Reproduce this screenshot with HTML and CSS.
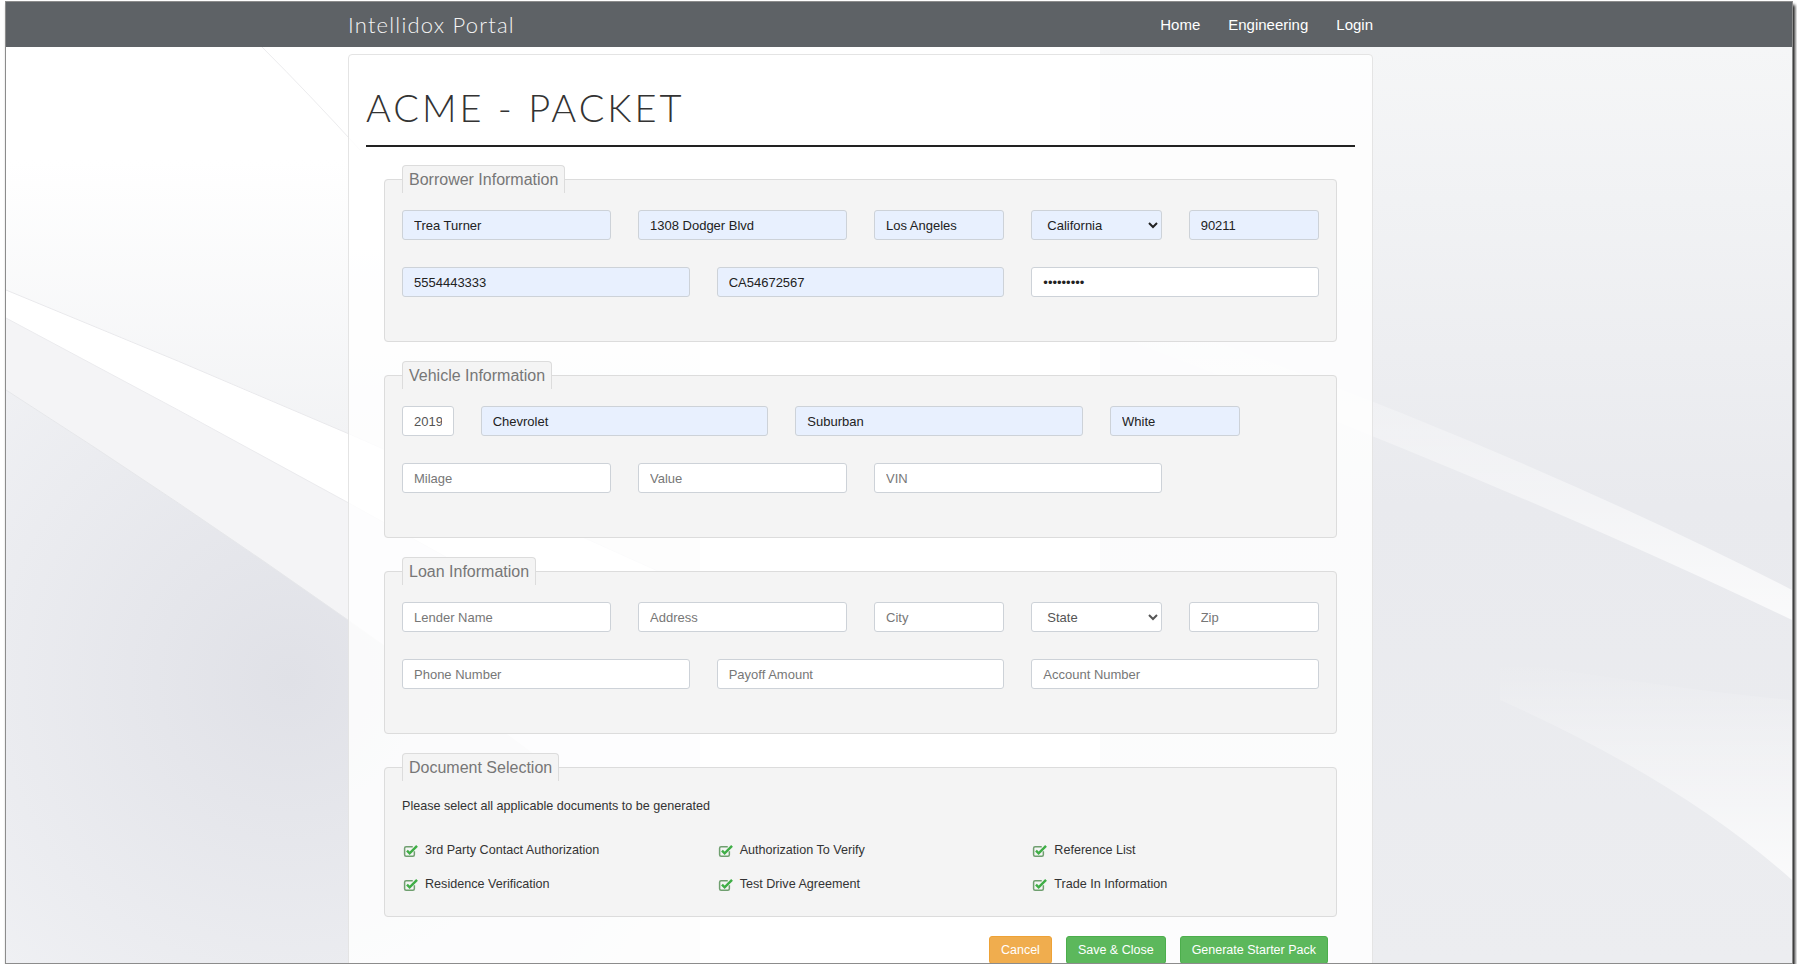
FILE: index.html
```html
<!DOCTYPE html>
<html lang="en">
  <head>
    <meta charset="UTF-8" />
    <meta name="viewport" content="width=device-width, initial-scale=1.0" />
    <title>Intellidox Portal - ACME Packet</title>
    <link rel="stylesheet" href="styles.css">
  </head>
  <body>
    <div class="window">
      <svg class="backdrop" viewBox="6 2 1786 961" preserveAspectRatio="none">
        <defs>
          <linearGradient id="fade-top" gradientUnits="userSpaceOnUse" x1="0" y1="160" x2="0" y2="460">
            <stop offset="0" stop-color="#ffffff"></stop>
            <stop offset="1" stop-color="#f1f2f4"></stop>
          </linearGradient>
          <radialGradient id="gray-left" gradientUnits="userSpaceOnUse" cx="290" cy="680" r="430">
            <stop offset="0" stop-color="#e0e1e7"></stop>
            <stop offset="1" stop-color="#f0f1f4"></stop>
          </radialGradient>
          <linearGradient id="gray-right" gradientUnits="userSpaceOnUse" x1="0" y1="47" x2="0" y2="962">
            <stop offset="0" stop-color="#f5f6f7"></stop>
            <stop offset="0.5" stop-color="#e9eaee"></stop>
            <stop offset="1" stop-color="#ecedf0"></stop>
          </linearGradient>
          <linearGradient id="sheen" x1="0" y1="0" x2="0" y2="1">
            <stop offset="0" stop-color="#ffffff" stop-opacity="0"></stop>
            <stop offset="1" stop-color="#ffffff" stop-opacity="0.75"></stop>
          </linearGradient>
        </defs>
        <rect x="6" y="2" width="1786" height="961" fill="#ffffff"></rect>
        <path d="M6 160 L700 160 L700 590 Q350 430 6 290 Z" fill="url(#fade-top)"></path>
        <path d="M6 318 Q350 500 700 700 L700 880 Q350 610 6 390 Z" fill="#f4f4f6"></path>
        <path d="M6 390 Q350 610 700 880 L700 963 L6 963 Z" fill="url(#gray-left)"></path>
        <path d="M6 290 Q350 430 700 590 L700 700 Q350 500 6 318 Z" fill="#ffffff"></path>
        <path d="M6 290 Q350 430 700 590" fill="none" stroke="#e9e9ec"></path>
        <path d="M6 318 Q350 500 700 700" fill="none" stroke="#ebebee"></path>
        <path d="M6 390 Q350 610 700 880" fill="none" stroke="#e6e7ea"></path>
        <path d="M262 47 Q310 95 360 150" fill="none" stroke="#ececee"></path>
        <rect x="1100" y="47" width="692" height="916" fill="url(#gray-right)"></rect>
        <path d="M1100 300 Q1500 440 1792 590 L1792 620 Q1500 480 1100 330 Z" fill="url(#sheen)"></path>
        <path d="M1500 700 Q1680 780 1792 880 L1792 700 Q1680 690 1500 660 Z" fill="url(#sheen)"></path>
      </svg>

      <header class="navbar">
        <div class="navbar-inner">
          <a class="brand" href="#">Intellidox Portal</a>
          <nav class="nav-links">
            <a href="#">Home</a>
            <a href="#">Engineering</a>
            <a href="#">Login</a>
          </nav>
        </div>
      </header>

      <main class="card">
        <h1 class="page-title">ACME - PACKET</h1>
        <hr class="title-rule" />

        <form class="packet-form">
          <fieldset class="panel">
            <legend>Borrower Information</legend>
            <div class="form-row">
              <input class="field filled span-3" type="text" value="Trea Turner" />
              <input class="field filled span-3" type="text" value="1308 Dodger Blvd" />
              <input class="field filled span-2" type="text" value="Los Angeles" />
              <select class="field filled span-2">
                <option>California</option>
              </select>
              <input class="field filled span-2" type="text" value="90211" />
            </div>
            <div class="form-row">
              <input class="field filled span-4" type="text" value="5554443333" />
              <input class="field filled span-4" type="text" value="CA54672567" />
              <input class="field span-4" type="password" value="123456789" />
            </div>
          </fieldset>

          <fieldset class="panel">
            <legend>Vehicle Information</legend>
            <div class="form-row">
              <input class="field muted span-1" type="text" value="2019" />
              <input class="field filled span-4" type="text" value="Chevrolet" />
              <input class="field filled span-4" type="text" value="Suburban" />
              <input class="field filled span-2" type="text" value="White" />
            </div>
            <div class="form-row">
              <input class="field span-3" type="text" placeholder="Milage" />
              <input class="field span-3" type="text" placeholder="Value" />
              <input class="field span-4" type="text" placeholder="VIN" />
            </div>
          </fieldset>

          <fieldset class="panel">
            <legend>Loan Information</legend>
            <div class="form-row">
              <input class="field span-3" type="text" placeholder="Lender Name" />
              <input class="field span-3" type="text" placeholder="Address" />
              <input class="field span-2" type="text" placeholder="City" />
              <select class="field muted span-2">
                <option>State</option>
              </select>
              <input class="field span-2" type="text" placeholder="Zip" />
            </div>
            <div class="form-row">
              <input class="field span-4" type="text" placeholder="Phone Number" />
              <input class="field span-4" type="text" placeholder="Payoff Amount" />
              <input class="field span-4" type="text" placeholder="Account Number" />
            </div>
          </fieldset>

          <fieldset class="panel panel-docs">
            <legend>Document Selection</legend>
            <p class="doc-note">Please select all applicable documents to be generated</p>
            <div class="doc-grid">
              <label class="doc-option">
                <svg class="check-icon" viewBox="0 0 14 14">
                  <path d="M10.6 7.6v3.4a1.4 1.4 0 0 1-1.4 1.4H2.9a1.4 1.4 0 0 1-1.4-1.4V4.9a1.4 1.4 0 0 1 1.4-1.4h6.2" fill="none" stroke="#6f9f6f" stroke-width="1.4"></path>
                  <path d="M3.7 7.1l2.5 2.5 6.9-7" fill="none" stroke="#3fae46" stroke-width="2.3"></path>
                </svg>
                3rd Party Contact Authorization
              </label>
              <label class="doc-option">
                <svg class="check-icon" viewBox="0 0 14 14">
                  <path d="M10.6 7.6v3.4a1.4 1.4 0 0 1-1.4 1.4H2.9a1.4 1.4 0 0 1-1.4-1.4V4.9a1.4 1.4 0 0 1 1.4-1.4h6.2" fill="none" stroke="#6f9f6f" stroke-width="1.4"></path>
                  <path d="M3.7 7.1l2.5 2.5 6.9-7" fill="none" stroke="#3fae46" stroke-width="2.3"></path>
                </svg>
                Authorization To Verify
              </label>
              <label class="doc-option">
                <svg class="check-icon" viewBox="0 0 14 14">
                  <path d="M10.6 7.6v3.4a1.4 1.4 0 0 1-1.4 1.4H2.9a1.4 1.4 0 0 1-1.4-1.4V4.9a1.4 1.4 0 0 1 1.4-1.4h6.2" fill="none" stroke="#6f9f6f" stroke-width="1.4"></path>
                  <path d="M3.7 7.1l2.5 2.5 6.9-7" fill="none" stroke="#3fae46" stroke-width="2.3"></path>
                </svg>
                Reference List
              </label>
              <label class="doc-option">
                <svg class="check-icon" viewBox="0 0 14 14">
                  <path d="M10.6 7.6v3.4a1.4 1.4 0 0 1-1.4 1.4H2.9a1.4 1.4 0 0 1-1.4-1.4V4.9a1.4 1.4 0 0 1 1.4-1.4h6.2" fill="none" stroke="#6f9f6f" stroke-width="1.4"></path>
                  <path d="M3.7 7.1l2.5 2.5 6.9-7" fill="none" stroke="#3fae46" stroke-width="2.3"></path>
                </svg>
                Residence Verification
              </label>
              <label class="doc-option">
                <svg class="check-icon" viewBox="0 0 14 14">
                  <path d="M10.6 7.6v3.4a1.4 1.4 0 0 1-1.4 1.4H2.9a1.4 1.4 0 0 1-1.4-1.4V4.9a1.4 1.4 0 0 1 1.4-1.4h6.2" fill="none" stroke="#6f9f6f" stroke-width="1.4"></path>
                  <path d="M3.7 7.1l2.5 2.5 6.9-7" fill="none" stroke="#3fae46" stroke-width="2.3"></path>
                </svg>
                Test Drive Agreement
              </label>
              <label class="doc-option">
                <svg class="check-icon" viewBox="0 0 14 14">
                  <path d="M10.6 7.6v3.4a1.4 1.4 0 0 1-1.4 1.4H2.9a1.4 1.4 0 0 1-1.4-1.4V4.9a1.4 1.4 0 0 1 1.4-1.4h6.2" fill="none" stroke="#6f9f6f" stroke-width="1.4"></path>
                  <path d="M3.7 7.1l2.5 2.5 6.9-7" fill="none" stroke="#3fae46" stroke-width="2.3"></path>
                </svg>
                Trade In Information
              </label>
            </div>
          </fieldset>

          <div class="actions">
            <button class="btn btn-warning" type="button">Cancel</button>
            <button class="btn btn-success" type="button">Save &amp; Close</button>
            <button class="btn btn-success" type="button">Generate Starter Pack</button>
          </div>
        </form>
      </main>
    </div>
  </body>
</html>
```

FILE: styles.css
```css
* {
  box-sizing: border-box;
}

body {
  margin: 0;
  background: #fff;
  font-family: "Liberation Sans", Arial, sans-serif;
  color: #333;
}

/* window frame of the screenshot */
.window {
  position: relative;
  z-index: 0;
  width: 1788px;
  height: 963px;
  margin: 1px 0 0 5px;
  border: 1px solid #8c8c8c;
  box-shadow: 2px 4px 3px rgba(0, 0, 0, 0.9);
  overflow: hidden;
}

.backdrop {
  position: absolute;
  top: 0;
  left: 0;
  width: 100%;
  height: 100%;
  z-index: -1;
  display: block;
}

.navbar {
  height: 45px;
  background: #5e6266;
}

.navbar-inner {
  width: 1025px;
  height: 100%;
  margin-left: 342px;
  display: flex;
  align-items: center;
  justify-content: space-between;
}

.brand {
  font-family: Lato, "Liberation Sans", sans-serif;
  font-weight: 300;
  font-size: 22px;
  letter-spacing: 1.2px;
  color: #f4f4f4;
  text-decoration: none;
}

.nav-links {
  display: flex;
  gap: 28px;
}

.nav-links a {
  font-size: 15px;
  color: #fff;
  text-decoration: none;
}

.card {
  width: 1025px;
  min-height: 960px;
  margin: 7px 0 0 342px;
  padding: 30px 17px 0;
  background: rgba(255, 255, 255, 0.82);
  border: 1px solid #e4e4e4;
  border-radius: 4px;
}

.page-title {
  margin: 0;
  font-family: Lato, "Liberation Sans", sans-serif;
  font-weight: 300;
  font-size: 38px;
  line-height: 44px;
  letter-spacing: 3px;
  color: #333;
}

.title-rule {
  margin: 16px 0 18px;
  border: 0;
  border-top: 2px solid #222;
}

.packet-form {
  padding: 0 18px;
}

.panel {
  min-width: 0;
  margin: 0 0 19px;
  padding: 17px 17px 44px;
  background: #f4f4f4;
  border: 1px solid #dcdcdc;
  border-radius: 4px;
}

.panel legend {
  height: 28px;
  padding: 0 6px;
  font-size: 16px;
  line-height: 27px;
  color: #777;
  background: #f4f4f4;
  border: 1px solid #dcdcdc;
  border-bottom: 0;
  border-radius: 4px 4px 0 0;
}

.form-row {
  display: grid;
  grid-template-columns: repeat(12, minmax(0, 1fr));
  column-gap: 27px;
}

.form-row + .form-row {
  margin-top: 27px;
}

.span-1 { grid-column: span 1; }
.span-2 { grid-column: span 2; }
.span-3 { grid-column: span 3; }
.span-4 { grid-column: span 4; }

.field {
  width: 100%;
  height: 30px;
  padding: 0 11px;
  font-family: "Liberation Sans", Arial, sans-serif;
  font-size: 13px;
  color: #222;
  background: #fff;
  border: 1px solid #cdd2d8;
  border-radius: 3px;
}

.field::placeholder {
  color: #777;
}

.field.filled {
  background: #e8f0fe;
}

.field.muted {
  color: #555;
}

select.field {
  padding: 0 4px 0 11px;
}

.panel-docs {
  padding-bottom: 22px;
}

.doc-note {
  margin: 0 0 26px;
  font-size: 12.6px;
  line-height: 16px;
  color: #333;
}

.doc-grid {
  display: grid;
  grid-template-columns: repeat(3, minmax(0, 1fr));
  column-gap: 27px;
  row-gap: 14px;
}

.doc-option {
  display: flex;
  align-items: center;
  gap: 7px;
  height: 20px;
  padding-left: 1px;
  font-size: 12.6px;
  color: #333;
}

.check-icon {
  width: 15px;
  height: 15px;
  flex: none;
}

.actions {
  display: flex;
  justify-content: flex-end;
  gap: 14px;
  padding-right: 9px;
}

.btn {
  height: 28px;
  padding: 0 11px;
  font-family: "Liberation Sans", Arial, sans-serif;
  font-size: 12.5px;
  color: #fff;
  border: 1px solid;
  border-radius: 3px;
}

.btn-warning {
  background: #f0ad4e;
  border-color: #eea236;
}

.btn-success {
  background: #5cb85c;
  border-color: #4cae4c;
}
```
